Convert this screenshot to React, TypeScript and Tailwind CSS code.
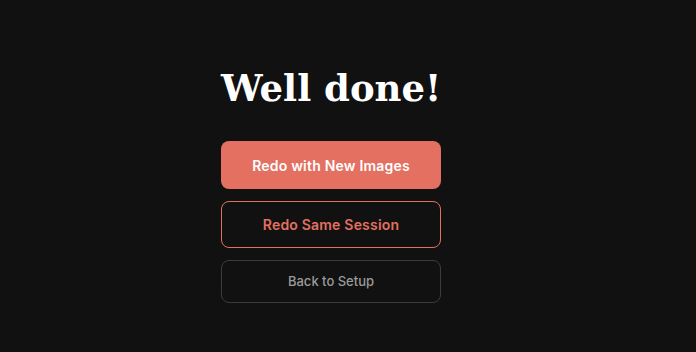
export default function App() {
  return (
    <div className="flex h-[352px] w-full justify-center bg-[#111111] pr-[34px] pt-[64px] font-['Inter',sans-serif]">
      <div className="flex w-[220px] flex-col items-stretch">
        <h1 className="whitespace-nowrap text-center font-['DejaVu_Serif',serif] text-[37px] font-bold leading-[48px] text-white">
          Well done!
        </h1>
        <div className="mt-[29px] flex flex-col gap-3">
          <button className="h-[48px] rounded-lg bg-[#e37060] text-[14px] font-semibold tracking-[0.2px] text-white">
            Redo with New Images
          </button>
          <button className="h-[47px] rounded-lg border border-[#e37060] text-[14px] font-semibold tracking-[0.2px] text-[#e37060]">
            Redo Same Session
          </button>
          <button className="h-[43px] rounded-lg border border-[#3c3c3c] text-[13px] font-medium text-[#9a9a9a]">
            Back to Setup
          </button>
        </div>
      </div>
    </div>
  );
}
